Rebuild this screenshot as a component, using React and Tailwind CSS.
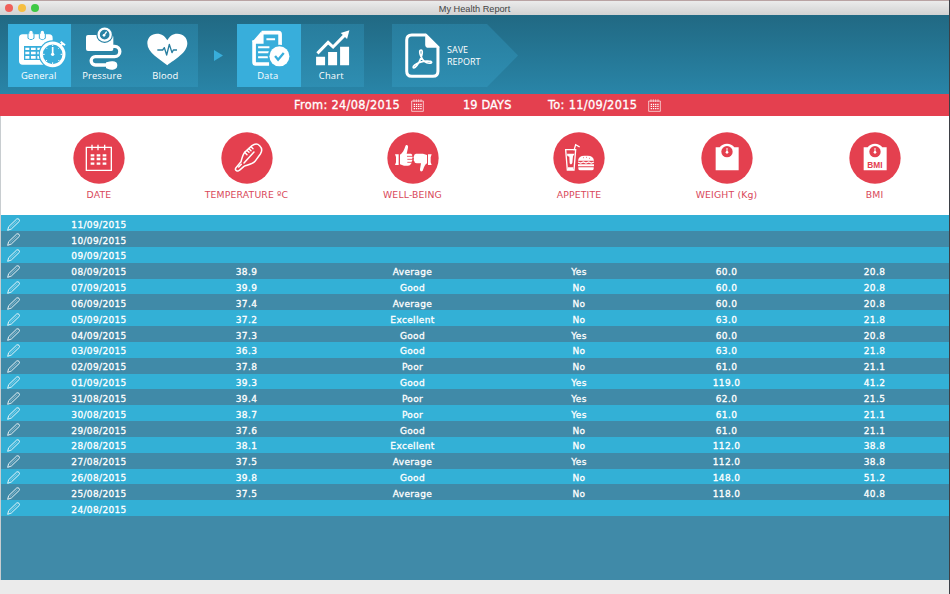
import React from 'react'

const COLS = 'grid grid-cols-[24px_148px_147px_185px_148px_147px_1fr]'

const ROWS = [
  ['11/09/2015'],
  ['10/09/2015'],
  ['09/09/2015'],
  ['08/09/2015', '38.9', 'Average', 'Yes', '60.0', '20.8'],
  ['07/09/2015', '39.9', 'Good', 'No', '60.0', '20.8'],
  ['06/09/2015', '37.4', 'Average', 'No', '60.0', '20.8'],
  ['05/09/2015', '37.2', 'Excellent', 'No', '63.0', '21.8'],
  ['04/09/2015', '37.3', 'Good', 'Yes', '60.0', '20.8'],
  ['03/09/2015', '36.3', 'Good', 'No', '63.0', '21.8'],
  ['02/09/2015', '37.8', 'Poor', 'No', '61.0', '21.1'],
  ['01/09/2015', '39.3', 'Good', 'Yes', '119.0', '41.2'],
  ['31/08/2015', '39.4', 'Poor', 'Yes', '62.0', '21.5'],
  ['30/08/2015', '38.7', 'Poor', 'Yes', '61.0', '21.1'],
  ['29/08/2015', '37.6', 'Good', 'No', '61.0', '21.1'],
  ['28/08/2015', '38.1', 'Excellent', 'No', '112.0', '38.8'],
  ['27/08/2015', '37.5', 'Average', 'Yes', '112.0', '38.8'],
  ['26/08/2015', '39.8', 'Good', 'No', '148.0', '51.2'],
  ['25/08/2015', '37.5', 'Average', 'No', '118.0', '40.8'],
  ['24/08/2015'],
]

function GeneralIcon() {
  return (
    <svg viewBox="24 72 190 138" className="h-[46px] w-full" fill="none">
      <rect x="57" y="103" width="101" height="91" rx="11" fill="#fff" />
      <path d="M84 101v14q9 8 18 0v-14M118 101v14q9 8 18 0v-14" fill="#fff" stroke="#38aedb" strokeWidth="3" />
      <path d="M88 97q0-5 5-5t5 5v20H88zM122 97q0-5 5-5t5 5v20h-10z" fill="#fff" />
      <rect x="72" y="138" width="60" height="42" fill="#38aedb" />
      <path d="M76 143h12v7H76zM93 143h14v7H93zM112 143h14v7h-14zM76 155h12v8H76zM93 155h14v8H93zM112 155h14v8h-14zM76 168h12v8H76zM93 168h14v8H93zM112 168h14v8h-14z" fill="#fff" />
      <circle cx="158" cy="163" r="42" fill="#38aedb" />
      <circle cx="158" cy="163" r="34" stroke="#fff" strokeWidth="9" />
      <path d="m182 137 8-8M182 125l13 11" stroke="#fff" strokeWidth="6" />
      <path d="M158 141v22" stroke="#fff" strokeWidth="5" />
      <circle cx="158" cy="163" r="5" fill="#fff" />
      <path d="M158 134v4M158 187v6M129 163h5M182 163h5M138 143l3 3M178 143l-3 3M138 183l3-3M178 183l-3-3" stroke="#fff" strokeWidth="3" />
    </svg>
  )
}

function PressureIcon() {
  return (
    <svg viewBox="214 72 190 138" className="h-[46px] w-full" fill="none">
      <rect x="259" y="105" width="82" height="48" rx="6" fill="#fff" />
      <circle cx="315" cy="104" r="25" fill="#2882a4" />
      <path d="M325 139h20a15.500 15.500 0 0 1 0 31h-58a12.500 12.500 0 0 0 0 25h40" stroke="#fff" strokeWidth="10" />
      <path d="M321 189q20-7 28 0 4 7 0 14-8 9-28 0z" fill="#fff" stroke="#fff" strokeWidth="4" />
      <circle cx="315" cy="104" r="18" stroke="#fff" strokeWidth="7" />
      <path d="m313 106 8-11" stroke="#fff" strokeWidth="4" />
      <circle cx="313" cy="106" r="4" fill="#fff" />
    </svg>
  )
}

function BloodIcon() {
  return (
    <svg viewBox="404 72 190 138" className="h-[46px] w-full" fill="none">
      <path d="M501 196c-23-18-60-38-60-66 0-18 13-29 29-29 14 0 25 8 31 20 6-12 16-20 30-20 17 0 30 12 30 29 0 29-38 48-60 66z" fill="#fff" />
      <path d="M471 150h16l5-7 7 22 8-32 8 25 4-8h11" stroke="#277d9f" strokeWidth="4" strokeLinejoin="round" />
    </svg>
  )
}

function DataIcon() {
  return (
    <svg viewBox="51 72 190 138" className="h-[46px] w-full" fill="none">
      <path d="M125 98h51q4 0 4 5v35M125 98v28h-23v61q0 5 5 5h40" stroke="#fff" strokeWidth="11" />
      <path d="M96 126 125 93v33z" fill="#fff" />
      <path d="M139 118h26M114 142h34M114 157h34M114 172h32" stroke="#fff" strokeWidth="6" />
      <circle cx="178" cy="169" r="35" fill="#38aedb" />
      <circle cx="178" cy="169" r="30" fill="#fff" />
      <path d="m165 168 9 11 17-20" stroke="#38aedb" strokeWidth="7" />
    </svg>
  )
}

function ChartIcon() {
  return (
    <svg viewBox="240 72 190 138" className="h-[46px] w-full" fill="#fff">
      <path d="M285 170h27v26h-27zM321 156h27v40h-27zM357 140h27v56h-27z" />
      <path d="m289 160 32-33 15 14 37-38" fill="none" stroke="#fff" strokeWidth="9" />
      <path d="m385 91-7 26-19-18z" />
    </svg>
  )
}

function PdfIcon() {
  return (
    <svg viewBox="552 96 110 140" className="h-[47px] w-[37px] shrink-0" fill="none">
      <path d="M617 105h-42q-15 0-15 15v93q0 15 15 15h63q15 0 15-15v-73" stroke="#fff" strokeWidth="9" />
      <path d="M615 101h4l38 38v4h-32q-10 0-10-10z" fill="#fff" />
      <path d="M603 150c-6 0-5 9-1 18 5 12 14 22 27 21 8-1 7-6-4-6-13-1-31 4-41 11-8 6-5 12 1 7 8-7 16-23 20-36 2-9 2-15-2-15z" stroke="#fff" strokeWidth="5" />
    </svg>
  )
}

function CalendarSmall() {
  return (
    <svg viewBox="0 0 39 39" className="h-[13px] w-[13px]" fill="none" stroke="#fff">
      <path d="M2 6h35v31H2z" strokeWidth="2" />
      <path d="M9 1v8M16 1v8M23 1v8M30 1v8" strokeWidth="2" />
      <path d="M8 16h24M8 22h24M8 29h24" strokeWidth="3.500" strokeDasharray="4 2.600" />
    </svg>
  )
}

function Pencil() {
  return (
    <svg viewBox="0 0 39 39" className="h-[13px] w-[13px]" fill="none" stroke="#fff" strokeWidth="2.600" strokeLinejoin="round">
      <path d="m2 37 3-11L29 3q4-2 7 1t1 6L13 33z" />
      <path d="m9 29 22-21" strokeWidth="1" />
    </svg>
  )
}

// Glyphs below are drawn on a 156 unit disc
function DateGlyph() {
  return (
    <>
      <path d="M40 46h75v69H40zM57 38v17M75 38v17M95 38v17" stroke="#fff" strokeWidth="4" fill="none" />
      <path d="M53 70h50M53 81h50M53 95h50" stroke="#fff" strokeWidth="7" strokeDasharray="11 7" />
    </>
  )
}

function ThermometerGlyph() {
  return (
    <g fill="none" stroke="#fff" strokeWidth="4.500" strokeLinejoin="round" strokeLinecap="round">
      <path d="M45 107q-4 6 1 9t9-1l14-12c10-4 25-6 33-15l16-22c6-9 4-19-2-25s-15-6-23 0L74 58c-9 7-11 21-14 31z" />
      <path d="M69 93 99 60M53 105l8-8M71 61l7 7M79 56l5 5M84 50l6 6M91 45l5 5" />
    </g>
  )
}

function ThumbsGlyph() {
  return (
    <>
      <path d="M24 67h11v32H24l3-8V75zM39 68c8-4 13-15 16-25 2-7 10-4 8 4l-4 18h13q6 2 3 8 4 4 0 8 3 4-1 8 1 4-3 8-1 4-8 4H51L39 97z" fill="#fff" />
      <path d="M60 73h15M61 82h15M61 91h14" stroke="#e4404f" strokeWidth="2.500" />
      <path d="M134 67h-11v32h11l-3-8V76zM120 69l-12-4H87q-6 1-6 7-3 4 0 8-3 5 1 8 0 6 7 6h13l-3 17c-1 8 6 10 9 3 4-11 6-16 12-20z" fill="#fff" />
    </>
  )
}

function FoodGlyph() {
  return (
    <>
      <path d="m38 53 5 61h20l5-61z" fill="none" stroke="#fff" strokeWidth="4" />
      <path d="M42 65h23l-5 8-2 20q-4 8-8 1l-1-20-6-2zM45 106h16v8H45z" fill="#fff" />
      <path d="m63 55 5-17 12 7" fill="none" stroke="#fff" strokeWidth="4" />
      <path d="M75 86q2-15 19-15h10q17 0 19 15zM75 97h48v6H75zM76 106h46v4q0 5-6 5H82q-6 0-6-5z" fill="#fff" />
      <path d="m75 90 8 3 8-3 8 3 8-3 8 3 8-3" fill="none" stroke="#fff" strokeWidth="4" />
      <path d="M90 77h3M99 76h3M108 79h3" stroke="#e4404f" strokeWidth="2" />
    </>
  )
}

function ScaleGlyph({ label }) {
  return (
    <>
      <path d="M44 46h12q8-11 22-11t22 11h13v69H44z" fill="#fff" />
      <circle cx="78" cy="59" r="17" fill="#e4404f" />
      <circle cx="78" cy="61" r="4" fill="#fff" />
      <path d="M78 48v12" stroke="#fff" strokeWidth="3" />
      {label && (
        <text x="78" y="108" textAnchor="middle" fill="#e4404f" fontSize="25" fontWeight="700" fontFamily="Liberation Sans, sans-serif">
          {label}
        </text>
      )}
    </>
  )
}

function Tab({ label, active, children }) {
  return (
    <div className={`flex h-[63px] flex-1 flex-col items-center ${active ? 'bg-[#38aedb]' : ''}`}>
      {children}
      <span className="pr-[2px] text-[9.4px] leading-[11px] tracking-[0.15px]">{label}</span>
    </div>
  )
}

function ColumnHead({ label, children }) {
  return (
    <div className="flex flex-col items-center">
      <svg viewBox="0 0 156 156" className="h-[52px] w-[52px]">
        <circle cx="78" cy="78" r="77" fill="#e4404f" />
        {children}
      </svg>
      <span className="mt-1 text-[9.3px] leading-[13px] tracking-[0.15px] whitespace-nowrap text-[#d9485a]">{label}</span>
    </div>
  )
}

export default function App() {
  return (
    <div className="flex h-[594px] w-[950px] overflow-hidden bg-[#3d3f45] font-['DejaVu_Sans',sans-serif]">
      <div className="flex w-[949px] flex-col">
        <div className="flex h-[15px] shrink-0 items-center border-t border-[#b9a3a3] bg-linear-to-b from-[#ebebeb] to-[#d2d2d2] px-[5px]">
          <div className="flex w-[60px] gap-[5px]">
            <span className="h-2 w-2 rounded-full bg-[#f0605a]" />
            <span className="h-2 w-2 rounded-full bg-[#f6be40]" />
            <span className="h-2 w-2 rounded-full bg-[#3fc944]" />
          </div>
          <div className="flex-1 pt-px pr-[60px] text-center font-['Liberation_Sans',sans-serif] text-[9.2px] leading-[14px] text-[#444]">My Health Report</div>
        </div>

        <header className="flex h-[79px] shrink-0 items-start bg-linear-to-b from-[#216983] to-[#2985a8] px-2 pt-[9px] font-['Open_Sans',sans-serif] text-white">
          <nav className="flex w-[190px] bg-linear-to-b from-[#287d9d] to-[#2e8eb2]">
            <Tab label="General" active><GeneralIcon /></Tab>
            <Tab label="Pressure"><PressureIcon /></Tab>
            <Tab label="Blood"><BloodIcon /></Tab>
          </nav>
          <svg viewBox="0 0 9 11" className="mt-[26px] ml-4 h-[11px] w-[9px] shrink-0">
            <path d="M0 0 9 5.500 0 11z" fill="#38aedb" />
          </svg>
          <nav className="ml-[14px] flex w-[127px] bg-linear-to-b from-[#287d9d] to-[#2e8eb2]">
            <Tab label="Data" active><DataIcon /></Tab>
            <Tab label="Chart"><ChartIcon /></Tab>
          </nav>
          <button className="ml-7 flex h-[63px] w-[126px] items-center gap-[6px] bg-linear-to-b from-[#287d9d] to-[#2e8eb2] pl-[12px] text-left text-[9px] leading-[12px] [clip-path:polygon(0_0,95px_0,100%_50%,95px_100%,0_100%)]">
            <PdfIcon />
            <span>SAVE<br />REPORT</span>
          </button>
        </header>

        <div className="flex h-[22px] shrink-0 items-center bg-[#e4404f] pl-[294px] text-[11.4px] tracking-[0.3px] text-white [-webkit-text-stroke:0.3px]">
          <span className="w-[117px] pt-[2px] whitespace-nowrap">From: 24/08/2015</span>
          <CalendarSmall />
          <span className="ml-[39px] w-[85px] pt-[2px] tracking-[0.1px]">19 DAYS</span>
          <span className="w-[100px] pt-[2px] whitespace-nowrap">To: 11/09/2015</span>
          <CalendarSmall />
        </div>

        <div className="flex h-[464px] shrink-0 flex-col border-l border-[#c8cdd0] bg-[#408aa8]">
          <div className={`${COLS} h-[99.3px] shrink-0 bg-white pt-4`}>
            <span />
            <ColumnHead label="DATE"><DateGlyph /></ColumnHead>
            <ColumnHead label="TEMPERATURE ºC"><ThermometerGlyph /></ColumnHead>
            <ColumnHead label="WELL-BEING"><ThumbsGlyph /></ColumnHead>
            <ColumnHead label="APPETITE"><FoodGlyph /></ColumnHead>
            <ColumnHead label="WEIGHT (Kg)"><ScaleGlyph /></ColumnHead>
            <ColumnHead label="BMI"><ScaleGlyph label="BMI" /></ColumnHead>
          </div>
          {ROWS.map((row) => (
            <div key={row[0]} className={`${COLS} h-[15.84px] shrink-0 items-center text-center text-[9px] leading-[15px] tracking-[0.35px] text-white odd:bg-[#408aa8] even:bg-[#33b0d6] [-webkit-text-stroke:0.3px]`}>
              <span className="pl-[6px]"><Pencil /></span>
              {row.map((cell, i) => (
                <span key={i} className="pt-[2.5px]">{cell}</span>
              ))}
            </div>
          ))}
        </div>

        <footer className="flex-1 bg-[#ebebeb]" />
      </div>
    </div>
  )
}
